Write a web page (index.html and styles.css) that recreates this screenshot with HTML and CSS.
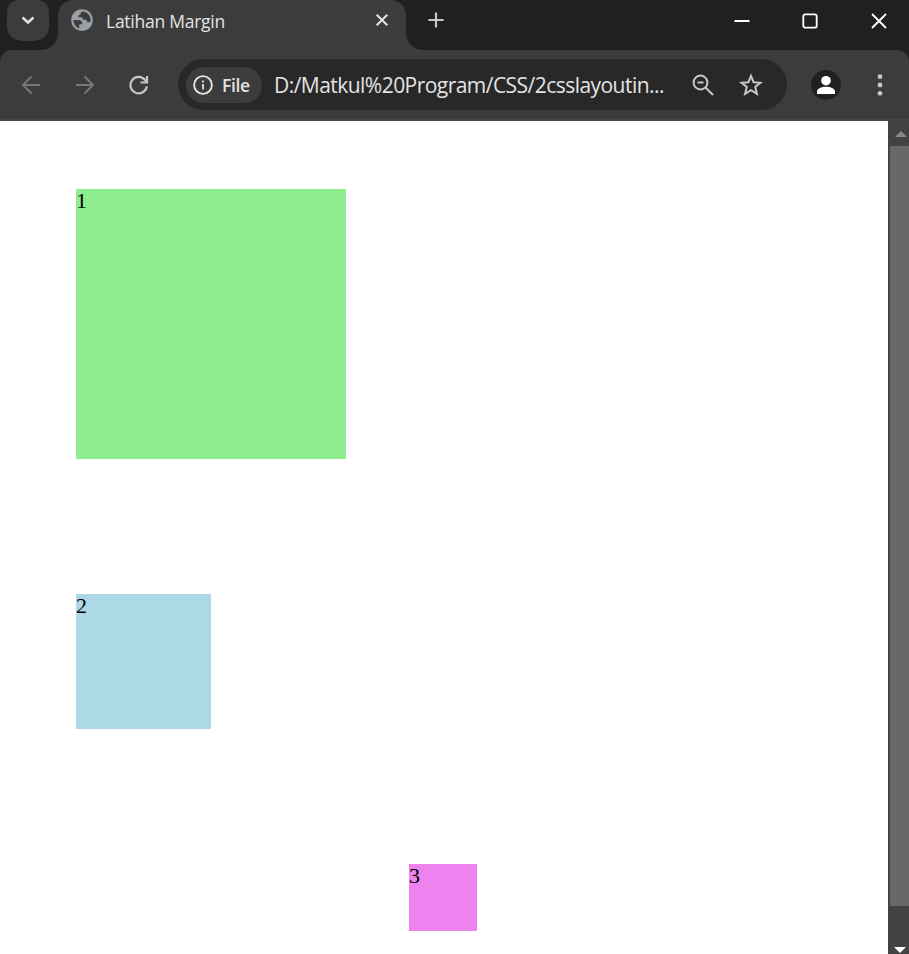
FILE: index.html
```html
<!DOCTYPE html>
<html lang="id">
<head>
<meta charset="utf-8">
<title>Latihan Margin</title>
<link rel="stylesheet" href="styles.css">
</head>
<body>
<header class="tabstrip">
  <button class="tab-search" aria-label="Search tabs"><svg width="42" height="41" viewBox="0 0 42 41"><path d="M15.500 17.500l5.500 5 5.500-5" fill="none" stroke="#e3e3e3" stroke-width="2.500"/></svg></button>
  <div class="tab">
    <svg class="favicon" width="22" height="22" viewBox="0 0 22 22"><circle cx="11" cy="11" r="10.8" fill="#9aa0a6"/><path d="M2.4 11H7.4c2.7 0 4 1.5 3.8 4.2H8.3v4.2C4.8 18.2 2.4 15 2.4 11z" fill="#3c3c3c"/><path d="M11.5 2.4c4.5.1 8.1 3.900 8.1 8.5v1.4c-.6.7-1.4 1-2.2.9-1.4-.1-2-1-2-2.4h-2.5c-1.3-.2-1.7-1-1.5-2.6H7.2c0-1.7.8-2.4 2.2-2.6.2-1.7.9-2.8 2.1-3.2z" fill="#3c3c3c"/></svg>
    <span class="tab-title">Latihan Margin</span>
    <svg class="tab-close" width="14" height="14" viewBox="0 0 14 14"><path d="M1.7 1.7l10.6 10.6M12.3 1.7L1.7 12.3" stroke="#e3e3e3" stroke-width="2"/></svg>
  </div>
  <svg class="new-tab" width="16" height="16" viewBox="0 0 16 16"><path d="M8 .4v15.2M.4 8h15.2" stroke="#c7c7c7" stroke-width="2.2"/></svg>
  <div class="window-controls">
    <svg width="16" height="16" viewBox="0 0 16 16"><path d="M.5 8h15" stroke="#fff" stroke-width="2"/></svg>
    <svg width="16" height="16" viewBox="0 0 16 16"><rect x="1.3" y="1.3" width="13.4" height="13.4" rx="2" fill="none" stroke="#fff" stroke-width="1.8"/></svg>
    <svg width="16" height="16" viewBox="0 0 16 16"><path d="M1 1l14 14M15 1L1 15" stroke="#fff" stroke-width="1.8"/></svg>
  </div>
</header>
<nav class="toolbar">
  <div class="nav-buttons">
    <svg width="20" height="20" viewBox="0 0 20 20" fill="none" stroke="#777" stroke-width="2"><path d="M19 10H3M10.500 1.500L2 10l8.500 8.500"/></svg>
    <svg width="20" height="20" viewBox="0 0 20 20" fill="none" stroke="#777" stroke-width="2"><path d="M1 10h16M9.500 1.500L18 10l-8.500 8.500"/></svg>
    <svg width="20" height="20" viewBox="0 0 20 20" fill="none" stroke="#c7c7c7" stroke-width="2.2"><path d="M17.8 11.300a8.200 8.200 0 1 1-1.700-6.300L18 7M18 1v6.500h-6.500"/></svg>
  </div>
  <div class="omnibox">
    <div class="chip">
      <svg width="20" height="20" viewBox="0 0 20 20"><circle cx="10" cy="10" r="8.900" fill="none" stroke="#e3e3e3" stroke-width="1.900"/><path d="M10 9v5.500M10 5.500v2" stroke="#e3e3e3" stroke-width="1.800"/></svg>
      <span>File</span>
    </div>
    <span class="url">D:/Matkul%20Program/CSS/2csslayoutin...</span>
    <svg class="zoom-out" width="22" height="22" viewBox="0 0 22 22" fill="none" stroke="#c7c7c7" stroke-width="2"><circle cx="8.500" cy="8.500" r="6.900"/><path d="M13.500 13.500l7.500 7.500M5.500 8.500h6"/></svg>
    <svg class="star" width="24" height="24" viewBox="0 0 24 24"><path d="M12 2.900l2.600 6.300 6.900.5-5.300 4.300 1.700 6.800L12 17.100l-5.900 3.700L7.800 14 2.500 9.700l6.900-.5z" fill="none" stroke="#c7c7c7" stroke-width="2"/></svg>
  </div>
  <svg class="profile" width="30" height="30" viewBox="0 0 30 30"><circle cx="15" cy="15" r="15" fill="#1f2120"/><circle cx="15" cy="10.700" r="4.800" fill="#fff"/><path d="M6 24v-2.300c0-3.500 4.500-5 9-5s9 1.500 9 5V24z" fill="#fff"/></svg>
  <svg class="menu" width="6" height="22" viewBox="0 0 6 22" fill="#c7c7c7"><circle cx="3" cy="2.700" r="2.400"/><circle cx="3" cy="11" r="2.400"/><circle cx="3" cy="19.300" r="2.400"/></svg>
</nav>
<div class="viewport">
  <main class="page">
    <div class="box box-one">1</div>
    <div class="box box-two">2</div>
    <div class="box box-three">3</div>
  </main>
  <div class="scrollbar">
    <svg class="arrow-up" width="12" height="6" viewBox="0 0 12 6"><path d="M0 6l6-6 6 6z" fill="#898989"/></svg>
    <div class="thumb"></div>
    <svg class="arrow-down" width="12" height="6" viewBox="0 0 12 6"><path d="M0 0h12L6 6z" fill="#fff"/></svg>
  </div>
</div>
</body>
</html>
```
FILE: styles.css
```css
* { box-sizing: border-box; }
body { margin: 0; height: 954px; overflow: hidden; display: flex; flex-direction: column; background: #1f2120; font-family: "Open Sans", sans-serif; }
svg { display: block; flex: none; }
.tabstrip { height: 50px; flex: none; display: flex; align-items: flex-start; }
.tab-search { width: 42px; height: 41px; margin-left: 7px; padding: 0; border: 0; border-radius: 12px 12px 15px 15px; background: #3c3c3c; }
.tab { position: relative; width: 348px; height: 50px; margin-left: 9px; padding: 0 17px 10px 13px; display: flex; align-items: center; background: #3c3c3c; border-radius: 15px 15px 0 0; }
.tab::before, .tab::after { content: ""; position: absolute; bottom: 0; width: 16px; height: 16px; }
.tab::before { left: -16px; background: radial-gradient(circle at 0 0, transparent 15.5px, #3c3c3c 16px); }
.tab::after { right: -16px; background: radial-gradient(circle at 100% 0, transparent 15.5px, #3c3c3c 16px); }
.tab-title { margin-left: 13px; padding-top: 2px; font-size: 17.5px; line-height: 24px; color: #e3e3e3; letter-spacing: -.25px; white-space: nowrap; }
.tab-close { margin-left: auto; }
.new-tab { margin: 12px 0 0 22px; }
.window-controls { margin: 13px 22.5px 0 auto; display: flex; gap: 52.5px; }
.toolbar { height: 71px; flex: none; display: flex; align-items: center; padding: 0 26px 0 21px; background: #3c3c3c; border-radius: 12px 12px 0 0; border-bottom: 2px solid #474747; }
.nav-buttons { display: flex; gap: 34px; }
.omnibox { width: 609px; height: 51px; margin-left: 29px; padding: 0 24px 0 8px; display: flex; align-items: center; background: #282828; border-radius: 26px; }
.chip { width: 76px; height: 36px; display: flex; align-items: center; gap: 9px; padding-left: 7px; border-radius: 18px; background: #3c3c3c; color: #e3e3e3; font-size: 17.5px; font-weight: 600; letter-spacing: -.4px; }
.url { width: 405px; margin-left: 12px; font-size: 21px; line-height: 28px; letter-spacing: -.54px; color: #e3e3e3; white-space: nowrap; }
.zoom-out { margin-left: 13px; }
.star { margin-left: auto; }
.profile { margin-left: 24px; margin-top: 1px; }
.menu { margin-left: auto; }
.viewport { flex: 1; display: flex; min-height: 0; }
.page { flex: 1; background: #fff; padding: 68px 0 0 76px; font: 22px/23px "Liberation Serif", serif; color: #000; overflow: hidden; }
.box-one { width: 270px; height: 270px; background: lightgreen; }
.box-two { width: 135px; height: 135px; margin-top: 135px; background: lightblue; }
.box-three { width: 68px; height: 67px; margin: 135px 0 0 333px; background: violet; }
.scrollbar { width: 21px; background: #424242; display: flex; flex-direction: column; align-items: flex-end; }
.arrow-up { margin: 10px 2px 9px 0; }
.thumb { width: 19px; height: 760px; background: #686868; }
.arrow-down { margin: 41px 3px 0 0; }
```
